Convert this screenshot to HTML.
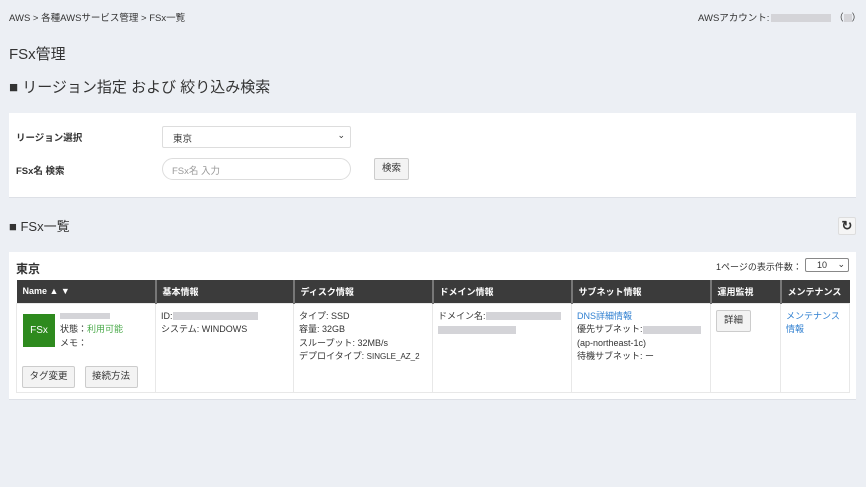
<!DOCTYPE html>
<html><head><meta charset="utf-8"><style>
*{box-sizing:border-box;margin:0;padding:0}
body{width:866px;height:487px;background:#eceff4;font-family:"Liberation Sans","Noto Sans CJK JP",sans-serif;color:#333;position:relative;overflow:hidden;font-size:10px}
.a{position:absolute;white-space:nowrap}
.blur{display:inline-block;background:#d4d4d8;height:8px;vertical-align:middle}
.panel{position:absolute;left:9px;width:847px;background:#fff;border-bottom:1px solid #dde0e6}
table{position:absolute;left:16px;top:280px;border-collapse:collapse;width:833px;table-layout:fixed}
th{background:#3b3b3b;color:#fff;font-size:9px;font-weight:bold;text-align:left;padding:0 6px;height:23px;border-left:2px solid #777;white-space:nowrap;overflow:hidden}
th:first-child{border-left:none}
td{vertical-align:top;border:1px solid #e8e8e8;height:89px;padding:6px 5px;font-size:9px;line-height:13.5px;white-space:nowrap;overflow:hidden}
.btn{display:inline-block;border:1px solid #ccc;background:#f3f3f3;border-radius:2px;font-size:9.5px;text-align:center}
a{color:#2f7fd0;text-decoration:none}
</style></head><body>
<div class="a" style="left:9px;top:10px;font-size:9.5px">AWS &gt; 各種AWSサービス管理 &gt; FSx一覧</div>
<div class="a" style="left:698px;top:10px;font-size:9.5px">AWSアカウント:<span class="blur" style="width:60px;margin-left:2px"></span> （<span class="blur" style="width:8px"></span>）</div>
<div class="a" style="left:9px;top:43px;font-size:15px">FSx管理</div>
<div class="a" style="left:9px;top:76px;font-size:15px">■ リージョン指定 および 絞り込み検索</div>
<div class="panel" style="top:113px;height:85px"></div>
<div class="a" style="left:16px;top:130px;font-size:9.5px;font-weight:bold">リージョン選択</div>
<div class="a" style="left:162px;top:126px;width:189px;height:22px;border:1px solid #ddd;border-radius:2px;background:#fff;padding:4px 10px;font-size:9.5px">東京<span style="position:absolute;right:5px;top:3px;font-size:9px">⌄</span></div>
<div class="a" style="left:16px;top:163px;font-size:9.5px;font-weight:bold">FSx名 検索</div>
<div class="a" style="left:162px;top:158px;width:189px;height:22px;border:1px solid #ddd;border-radius:11px;background:#fff;padding:4px 9px;font-size:9.5px;color:#999">FSx名 入力</div>
<div class="a btn" style="left:374px;top:158px;width:35px;height:22px;line-height:20px">検索</div>
<div class="a" style="left:9px;top:216px;font-size:13px">■ FSx一覧</div>
<div class="a" style="left:838px;top:217px;width:18px;height:18px;background:#f5f5f5;border:1px solid #ddd;border-radius:2px;text-align:center;font-size:13px;font-weight:bold;line-height:16px">↻</div>
<div class="panel" style="top:252px;height:148px"></div>
<div class="a" style="left:16px;top:260px;font-size:12px;font-weight:bold">東京</div>
<div class="a" style="left:716px;top:260px;font-size:9px">1ページの表示件数：</div>
<div class="a" style="left:805px;top:258px;width:44px;height:14px;border:1px solid #888;border-radius:2px;font-size:9px;padding:1px 0 0 11px">10<span style="position:absolute;right:3px;top:0px">⌄</span></div>
<table>
<colgroup><col style="width:139px"><col style="width:138px"><col style="width:139px"><col style="width:139px"><col style="width:139px"><col style="width:70px"><col style="width:69px"></colgroup>
<tr><th>Name ▲ ▼</th><th>基本情報</th><th>ディスク情報</th><th>ドメイン情報</th><th>サブネット情報</th><th>運用監視</th><th>メンテナンス</th></tr>
<tr>
<td style="position:relative"><div style="position:absolute;left:6px;top:10px;width:32px;height:33px;background:#2e8a1e;color:#fff;font-size:10px;line-height:33px;text-align:center">FSx</div>
<div style="margin-left:38px"><span class="blur" style="width:50px;height:6px"></span><br>状態：<span style="color:#4aaa4a">利用可能</span><br>メモ：</div>
<div style="position:absolute;left:5px;top:62px"><span class="btn" style="width:53px;height:22px;line-height:20px">タグ変更</span> <span class="btn" style="width:53px;height:22px;line-height:20px;margin-left:7px">接続方法</span></div></td>
<td>ID:<span class="blur" style="width:85px"></span><br>システム: WINDOWS</td>
<td>タイプ: SSD<br>容量: 32GB<br>スループット: 32MB/s<br>デプロイタイプ: <span style="font-size:8px">SINGLE_AZ_2</span></td>
<td>ドメイン名:<span class="blur" style="width:75px"></span><br><span class="blur" style="width:78px"></span></td>
<td><a>DNS詳細情報</a><br>優先サブネット:<span class="blur" style="width:58px"></span><br>(ap-northeast-1c)<br>待機サブネット: ー</td>
<td><span class="btn" style="width:35px;height:22px;line-height:20px">詳細</span></td>
<td><a>メンテナンス<br>情報</a></td>
</tr></table>
</body></html>
